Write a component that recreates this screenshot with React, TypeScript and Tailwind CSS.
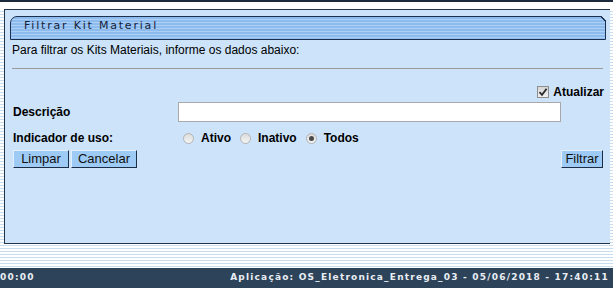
import React, { useState } from 'react';

const Radio = ({ checked, label, onClick }: { checked: boolean; label: string; onClick: () => void }) => (
  <label onClick={onClick} className="flex items-center cursor-pointer">
    <span className="w-[11px] h-[11px] rounded-full border border-[#b4b4b4] bg-[linear-gradient(180deg,#dcdcdc,#f4f4f4)] flex items-center justify-center">
      {checked && <span className="w-[5px] h-[5px] rounded-full bg-[#4a4a4a]" />}
    </span>
    <span className="ml-[7px] font-bold text-[12px] text-black">{label}</span>
  </label>
);

export default function App() {
  const [uso, setUso] = useState('todos');
  const [atualizar, setAtualizar] = useState(true);
  const [descricao, setDescricao] = useState('');

  return (
    <div className="w-[613px] h-[288px] flex flex-col overflow-hidden font-['Liberation_Sans',Arial,sans-serif] bg-[repeating-linear-gradient(180deg,#ffffff_0px,#ffffff_2px,#c9ddf0_2px,#c9ddf0_3px)]">
      <div className="h-[2px] bg-[#1c2b3b]" />
      <div className="h-[7px] bg-white" />

      {/* Panel */}
      <div className="ml-[4px] w-[606px] h-[235px] border-t border-l border-b border-[#22344d] bg-[#cce3fa] flex flex-col">
        {/* Header */}
        <div className="relative ml-[5px] mt-[6px] w-[596px] h-[24px] border border-[#1e3050] rounded-tl-[7px] bg-[repeating-linear-gradient(180deg,#8dbbee_0px,#8dbbee_2px,#abcff5_2px,#abcff5_3px)] flex items-center">
          <span className="ml-[13px] -mt-[3px] font-['DejaVu_Sans',Verdana,sans-serif] text-[11px] tracking-[1.8px] text-[#15233a]">
            Filtrar Kit Material
          </span>
          <div className="absolute -top-[1px] -right-[1px] w-[6px] h-[6px] bg-[linear-gradient(225deg,#cce3fa_0px,#cce3fa_3px,#1e3050_3px,#1e3050_4.5px,transparent_4.5px)]" />
        </div>

        <p className="ml-[7px] mt-[3px] text-[12px] leading-[14px] text-black">
          Para filtrar os Kits Materiais, informe os dados abaixo:
        </p>
        <div className="ml-[7px] mt-[11px] w-[591px] h-[1px] bg-[#9a9a9a]" />

        {/* Atualizar */}
        <div className="mt-[16px] mr-[6px] flex justify-end items-center h-[14px]">
          <span
            onClick={() => setAtualizar(!atualizar)}
            className="w-[12px] h-[12px] border border-[#8e8e8e] bg-[linear-gradient(180deg,#d6d6d6,#f0f0f0)] flex items-center justify-center cursor-pointer"
          >
            {atualizar && (
              <svg width="10" height="10" viewBox="0 0 10 10">
                <path d="M1.5 5.2 L4 7.8 L8.6 1.8" fill="none" stroke="#2b2b2b" strokeWidth="1.8" />
              </svg>
            )}
          </span>
          <span className="ml-[4px] font-bold text-[12px] text-black">Atualizar</span>
        </div>

        {/* Descricao */}
        <div className="mt-[3px] flex items-center h-[20px]">
          <span className="ml-[8px] w-[165px] font-bold text-[12px] text-black">Descrição</span>
          <input
            value={descricao}
            onChange={(e) => setDescricao(e.target.value)}
            className="w-[383px] h-[20px] border border-[#a9a9a9] bg-white outline-none px-[2px] text-[12px]"
          />
        </div>

        {/* Indicador */}
        <div className="mt-[6px] flex items-center h-[20px]">
          <span className="ml-[8px] w-[170px] font-bold text-[12px] text-black">Indicador de uso:</span>
          <div className="flex items-center gap-[9px]">
            <Radio checked={uso === 'ativo'} label="Ativo" onClick={() => setUso('ativo')} />
            <Radio checked={uso === 'inativo'} label="Inativo" onClick={() => setUso('inativo')} />
            <Radio checked={uso === 'todos'} label="Todos" onClick={() => setUso('todos')} />
          </div>
        </div>

        {/* Buttons */}
        <div className="mt-[2px] ml-[8px] mr-[7px] flex items-center justify-between">
          <div className="flex gap-[2px]">
            <button className="w-[56px] h-[18px] bg-[#9ecbf6] border border-t-[#e4f1fd] border-l-[#e4f1fd] border-r-[#1c2d48] border-b-[#1c2d48] text-[13px] leading-[16px] text-[#111]">
              Limpar
            </button>
            <button className="w-[66px] h-[18px] bg-[#9ecbf6] border border-t-[#e4f1fd] border-l-[#e4f1fd] border-r-[#1c2d48] border-b-[#1c2d48] text-[13px] leading-[16px] text-[#111]">
              Cancelar
            </button>
          </div>
          <button className="w-[42px] h-[18px] bg-[#9ecbf6] border border-t-[#e4f1fd] border-l-[#e4f1fd] border-r-[#1c2d48] border-b-[#1c2d48] text-[13px] leading-[16px] text-[#111]">
            Filtrar
          </button>
        </div>
      </div>

      <div className="h-[24px]" />

      {/* Footer */}
      <div className="h-[20px] bg-[#2d4359] flex items-center justify-between pr-[4px] font-['DejaVu_Sans',Verdana,sans-serif] font-bold text-[9px] tracking-[1.2px] text-[#e9eef4]">
        <span>00:00</span>
        <span>Aplicação: OS_Eletronica_Entrega_03 - 05/06/2018 - 17:40:11</span>
      </div>
    </div>
  );
}
